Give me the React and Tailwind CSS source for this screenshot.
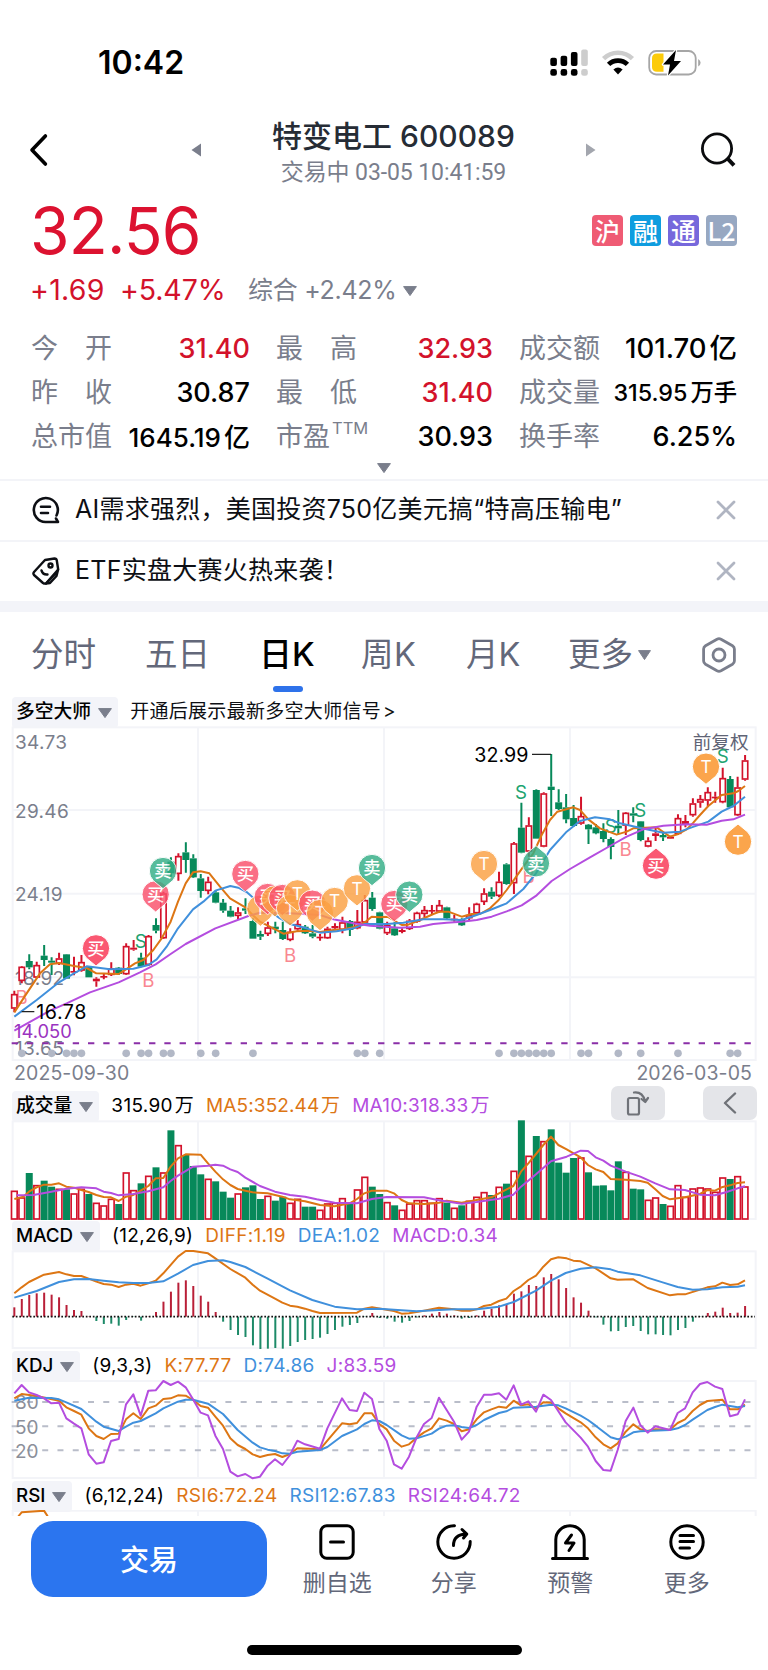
import React from "react";

// ===== Colors =====
const RED = "#d3122b";
const GREEN = "#07895a";
const ORANGE = "#dd7614";
const BLUE = "#4090dc";
const PURPLE = "#b44ddf";
const LINE = "#f3f4f8";
const GRAY = "#7a7e8c";

// ===== Chart units: 3 units = 1px, one candle every 22.37 units =====
const STEP = 22.37;
const cx = (i) => 43 + i * STEP;

// [direction, high, body top, body bottom, low, volume top, macd end]
const CANDLES = [
  ["u", 812, 822, 866, 877, 332, 682], ["u", 738, 740, 783, 790, 352, 657],
  ["d", 703, 723, 742, 748, 279, 645], ["u", 725, 735, 773, 775, 315, 640],
  ["d", 675, 707, 720, 738, 302, 638], ["d", 712, 722, 728, 765, 320, 644],
  ["u", 698, 715, 732, 735, 326, 652], ["d", 702, 703, 776, 776, 328, 675],
  ["u", 710, 753, 758, 766, 340, 690], ["u", 705, 726, 752, 755, 326, 693],
  ["d", 738, 740, 772, 772, 342, 709], ["u", 772, 776, 784, 800, 368, 723],
  ["u", 762, 768, 771, 778, 376, 732], ["u", 727, 745, 765, 768, 356, 731],
  ["d", 741, 743, 762, 765, 372, 737], ["u", 670, 678, 763, 765, 277, 720],
  ["u", 660, 683, 689, 692, 330, 711], ["d", 698, 713, 740, 742, 310, 722],
  ["u", 645, 648, 735, 738, 287, 709], ["d", 595, 615, 632, 640, 262, 696],
  ["u", 515, 520, 655, 657, 277, 665], ["d", 412, 425, 460, 470, 151, 635],
  ["u", 400, 408, 462, 482, 195, 608], ["d", 367, 397, 420, 458, 225, 601],
  ["d", 403, 415, 472, 474, 258, 618], ["d", 462, 475, 513, 533, 283, 647],
  ["u", 470, 485, 513, 523, 296, 665], ["d", 512, 517, 548, 550, 304, 696],
  ["d", 537, 548, 572, 578, 335, 725], ["d", 558, 572, 590, 592, 353, 750],
  ["u", 562, 577, 588, 598, 340, 765], ["d", 535, 565, 572, 582, 322, 771],
  ["d", 595, 603, 656, 656, 316, 796], ["d", 632, 642, 650, 660, 357, 807],
  ["u", 605, 622, 642, 648, 347, 806], ["d", 605, 620, 628, 640, 362, 804],
  ["d", 605, 630, 657, 660, 350, 806], ["u", 625, 635, 660, 664, 368, 798],
  ["u", 600, 612, 628, 632, 356, 786], ["d", 615, 620, 640, 642, 380, 780],
  ["d", 615, 640, 650, 655, 380, 777], ["u", 642, 650, 654, 662, 389, 773],
  ["u", 620, 626, 655, 657, 370, 762], ["u", 610, 618, 625, 630, 368, 750],
  ["u", 590, 607, 630, 640, 354, 740], ["d", 600, 603, 630, 648, 370, 735],
  ["u", 570, 605, 625, 628, 328, 729], ["u", 525, 540, 608, 612, 290, 711],
  ["d", 516, 533, 567, 572, 320, 699], ["d", 575, 577, 626, 628, 342, 714],
  ["u", 605, 615, 640, 645, 366, 716], ["d", 605, 625, 646, 648, 376, 725],
  ["u", 625, 630, 636, 640, 389, 728], ["u", 597, 602, 627, 630, 370, 723],
  ["u", 575, 578, 605, 608, 360, 712], ["u", 558, 570, 582, 592, 360, 706],
  ["u", 555, 570, 574, 583, 368, 701], ["u", 540, 555, 575, 578, 354, 696],
  ["d", 560, 562, 595, 597, 368, 701], ["u", 585, 596, 599, 605, 383, 706],
  ["d", 595, 600, 616, 618, 376, 716], ["u", 562, 585, 595, 600, 362, 714],
  ["u", 548, 551, 580, 583, 350, 706], ["u", 505, 520, 546, 555, 336, 692],
  ["d", 502, 515, 530, 537, 345, 686], ["u", 455, 485, 528, 532, 320, 676],
  ["d", 430, 433, 492, 494, 311, 672], ["u", 366, 370, 490, 522, 272, 641],
  ["d", 248, 323, 398, 400, 121, 634], ["u", 292, 316, 395, 410, 227, 615],
  ["d", 208, 210, 356, 356, 168, 618], ["u", 217, 220, 380, 382, 183, 592],
  ["d", 102, 200, 210, 288, 148, 582], ["d", 208, 247, 267, 270, 248, 598],
  ["d", 222, 262, 298, 310, 278, 624], ["d", 255, 294, 318, 320, 234, 652],
  ["u", 230, 288, 311, 314, 232, 668], ["d", 312, 314, 328, 372, 277, 692],
  ["d", 312, 322, 340, 343, 317, 712], ["d", 310, 333, 357, 367, 316, 734],
  ["d", 352, 357, 381, 418, 331, 754], ["d", 270, 317, 325, 342, 244, 753],
  ["u", 276, 278, 317, 345, 275, 741], ["d", 262, 280, 287, 307, 326, 738],
  ["d", 303, 304, 360, 364, 328, 753], ["u", 352, 362, 380, 382, 359, 763],
  ["u", 322, 340, 348, 363, 352, 763], ["d", 338, 345, 352, 363, 372, 765],
  ["u", 347, 350, 356, 357, 377, 766], ["u", 283, 294, 342, 345, 315, 750],
  ["u", 285, 303, 312, 322, 350, 744], ["u", 235, 250, 286, 290, 325, 725],
  ["u", 225, 237, 248, 263, 322, 711], ["u", 202, 216, 242, 258, 325, 699],
  ["u", 215, 230, 234, 248, 335, 695], ["u", 143, 174, 247, 250, 292, 683],
  ["d", 168, 177, 262, 264, 297, 699], ["u", 170, 202, 286, 288, 288, 698],
  ["u", 105, 121, 179, 182, 319, 678],
];

const DOTS = [1, 5, 7, 8, 9, 15, 17, 18, 20, 21, 25, 27, 32, 46, 47, 49, 65, 67, 68, 69, 70, 71, 72, 76, 77, 81, 84, 89, 96, 97];

// ===== Main chart lines =====
const MA_SHORT =
  "43,877 80,820 120,760 150,733 177,729 222,738 260,744 289,760 356,762 378,748 405,730 430,720 460,690 485,655 512,605 534,545 557,490 579,457 602,454 628,460 660,500 690,535 736,562 758,585 780,605 820,625 850,641 890,634 930,632 960,636 1000,630 1030,628 1060,622 1095,607 1115,590 1140,592 1162,590 1180,600 1205,615 1225,614 1260,600 1300,582 1320,575 1345,575 1385,590 1415,582 1440,582 1470,565 1496,540 1520,510 1545,475 1570,440 1600,400 1625,345 1650,300 1672,275 1720,262 1740,270 1765,298 1800,325 1850,344 1880,335 1900,325 1970,322 1990,336 2010,350 2035,342 2060,328 2080,308 2100,285 2125,258 2165,225 2200,220 2215,213 2235,198";
const MA_MID =
  "43,890 110,840 177,787 222,760 260,739 330,748 400,746 445,735 470,718 500,680 534,625 579,568 610,545 646,512 691,498 715,503 740,516 790,560 840,595 870,612 920,625 960,638 1010,634 1060,625 1095,612 1160,612 1210,608 1270,598 1330,598 1385,600 1430,585 1470,570 1500,558 1520,550 1570,507 1608,460 1650,390 1700,335 1740,303 1785,292 1830,298 1860,310 1925,325 1990,338 2040,335 2075,322 2125,305 2165,275 2200,258 2235,230";
const MA_LONG =
  "43,932 150,872 200,850 270,817 356,787 420,757 467,733 512,702 557,672 646,625 745,588 780,578 870,580 960,585 1000,598 1060,610 1110,617 1200,623 1260,620 1300,612 1340,608 1385,605 1430,600 1475,590 1520,574 1565,556 1610,526 1655,483 1710,447 1770,412 1830,378 1880,350 1930,328 1990,317 2060,313 2120,314 2165,302 2200,298 2235,284";

// ===== Volume lines =====
const VOL_MA5 =
  "43,357 70,350 87,335 110,322 132,314 154,314 177,310 199,320 222,323 244,330 266,336 289,345 311,351 333,352 356,363 378,350 400,345 422,332 445,318 467,295 490,294 512,260 534,235 557,223 602,224 624,250 646,275 669,298 691,315 713,327 736,332 758,337 803,340 825,345 847,350 870,358 915,364 960,375 1004,379 1049,370 1071,357 1093,340 1116,332 1160,332 1182,340 1205,360 1227,370 1272,372 1317,368 1340,362 1385,368 1430,360 1474,352 1497,340 1540,318 1563,275 1585,250 1608,222 1630,195 1653,170 1675,195 1700,208 1742,232 1764,255 1787,268 1810,276 1832,297 1877,299 1921,303 1943,308 1966,328 1988,348 2010,358 2055,352 2100,342 2122,330 2145,332 2165,322 2190,316 2213,309 2235,307";
const VOL_MA10 =
  "50,346 100,345 154,335 199,326 244,322 289,325 311,335 333,339 356,346 400,342 445,334 490,322 512,303 534,287 579,260 624,257 646,254 669,257 691,268 713,276 736,293 780,318 825,335 870,345 915,350 950,358 1004,368 1071,370 1116,357 1160,351 1272,352 1317,361 1385,371 1430,366 1497,356 1540,344 1563,320 1608,283 1653,244 1700,230 1742,212 1764,213 1787,232 1810,242 1832,257 1877,275 1921,290 1966,310 2010,328 2055,330 2100,344 2145,346 2180,336 2213,325 2235,319";

// ===== MACD lines =====
const DIFF =
  "43,640 65,622 87,606 132,584 177,576 199,583 222,588 244,588 266,596 289,605 311,612 333,614 356,621 378,614 400,611 422,617 445,610 467,602 490,580 534,530 557,513 580,513 624,520 646,535 691,567 736,593 758,614 780,632 825,656 847,668 870,677 892,680 915,686 937,693 960,699 1071,698 1093,686 1116,682 1160,689 1182,693 1205,701 1227,700 1272,692 1317,683 1362,688 1385,692 1410,692 1430,688 1452,678 1474,674 1497,663 1519,656 1541,633 1563,619 1585,600 1608,587 1630,560 1653,538 1675,532 1700,535 1720,542 1742,544 1787,565 1832,595 1853,599 1900,598 1943,624 2010,646 2033,643 2055,643 2122,622 2145,619 2167,608 2190,615 2213,613 2235,601";
const DEA =
  "43,653 110,633 177,606 222,598 266,597 311,602 356,607 400,609 445,609 490,604 534,581 579,555 624,543 669,541 691,546 736,561 803,596 870,631 937,660 1004,680 1071,688 1138,686 1182,689 1250,694 1317,690 1362,688 1430,688 1497,680 1541,666 1608,632 1653,602 1697,579 1742,566 1787,562 1832,568 1853,575 1921,586 1988,607 2033,621 2078,629 2122,628 2167,622 2213,620 2235,616";

// ===== KDJ lines =====
const K_LINE =
  "43,145 65,132 110,138 177,152 199,172 222,183 244,194 266,235 289,258 311,267 333,252 356,251 378,208 400,190 422,207 445,175 467,167 490,147 512,145 534,136 557,137 579,150 602,168 624,173 646,200 669,227 691,265 713,285 736,297 758,313 780,321 803,315 825,312 847,321 870,312 892,295 960,298 982,272 1026,220 1049,223 1071,219 1093,190 1116,190 1138,222 1160,238 1182,272 1205,290 1227,283 1250,263 1272,247 1295,235 1317,205 1340,212 1362,222 1385,244 1407,238 1430,208 1452,187 1474,178 1497,170 1519,173 1541,152 1563,166 1585,163 1608,175 1630,157 1653,158 1675,175 1697,190 1742,217 1764,235 1787,262 1810,283 1832,295 1853,280 1877,245 1900,223 1921,238 1943,243 1966,238 2010,239 2033,219 2055,208 2078,183 2100,165 2122,153 2167,149 2190,178 2213,178 2235,164";
const D_LINE =
  "43,152 87,143 154,144 177,148 199,157 244,177 289,215 311,230 356,243 378,230 400,218 422,213 467,190 490,175 534,155 557,149 579,149 624,161 669,192 713,240 758,278 780,292 803,299 825,303 847,310 870,311 892,305 960,300 982,291 1026,258 1071,238 1093,222 1116,211 1138,213 1160,225 1205,256 1227,266 1250,265 1295,251 1317,236 1340,227 1362,226 1385,231 1407,234 1430,225 1452,210 1497,189 1519,184 1541,173 1608,170 1653,164 1675,166 1697,175 1742,197 1764,210 1787,227 1832,262 1853,268 1877,260 1900,247 1921,244 2010,240 2033,235 2055,225 2078,209 2122,180 2145,171 2167,164 2213,172 2235,168";
const J_LINE =
  "43,130 65,105 87,127 110,135 132,145 154,160 177,158 199,205 222,221 244,235 266,313 289,341 311,337 333,273 356,267 378,163 400,133 422,197 445,122 467,121 490,93 512,105 534,95 557,112 579,148 602,188 624,196 646,257 669,297 691,365 713,379 736,372 758,385 780,380 803,347 825,328 847,345 870,315 892,272 915,283 960,296 982,235 1026,145 1049,180 1071,183 1093,128 1116,147 1138,237 1160,272 1182,343 1205,356 1227,320 1250,262 1272,222 1295,204 1317,143 1340,180 1362,215 1385,269 1407,245 1430,170 1452,134 1474,134 1497,130 1519,149 1541,106 1563,164 1585,154 1608,185 1630,134 1653,150 1697,217 1742,263 1764,290 1787,333 1810,360 1832,362 1853,300 1877,213 1900,173 1921,225 1943,248 1966,229 2010,240 2033,189 2055,175 2078,127 2100,102 2122,96 2145,110 2167,117 2190,199 2213,193 2235,148";

// ===== Signals =====
const PINS = [
  { t: "买", x: 288, y: 685, o: 0.95 },
  { t: "买", x: 467, y: 523 },
  { t: "卖", x: 489, y: 453 },
  { t: "买", x: 736, y: 462 },
  { t: "T", x: 781, y: 566 },
  { t: "买", x: 803, y: 531 },
  { t: "T", x: 825, y: 538 },
  { t: "买", x: 847, y: 534 },
  { t: "T", x: 870, y: 565 },
  { t: "T", x: 892, y: 520 },
  { t: "买", x: 937, y: 551 },
  { t: "T", x: 960, y: 579 },
  { t: "T", x: 1004, y: 543 },
  { t: "T", x: 1071, y: 505 },
  { t: "卖", x: 1116, y: 444 },
  { t: "买", x: 1183, y: 552 },
  { t: "卖", x: 1228, y: 524 },
  { t: "T", x: 1452, y: 432 },
  { t: "T", x: 2118, y: 140, o: 0.95 },
  { t: "卖", x: 1608, y: 430, up: true },
  { t: "买", x: 1968, y: 437, up: true, o: 0.95 },
  { t: "T", x: 2214, y: 365, up: true, o: 0.95 },
];
const PIN_COLORS = { 买: "#fa506b", 卖: "#33ae86", T: "#fba143" };

const LETTERS = [
  ["S", 422, 662], ["S", 1563, 215], ["S", 1832, 318], ["S", 1921, 270], ["S", 2168, 108],
  ["B", 65, 832], ["B", 445, 780], ["B", 870, 705], ["B", 1586, 468], ["B", 1877, 387],
];

const Triangle = ({ w = 14, h = 10 }) => (
  <svg width={w} height={h} viewBox="0 0 14 10" preserveAspectRatio="none" className="shrink-0">
    <path d="M0.6 0.6H13.4L7 9.6Z" fill={GRAY} stroke={GRAY} strokeLinejoin="round" />
  </svg>
);

const Poly = ({ points, color }) => (
  <polyline points={points} fill="none" stroke={color} strokeWidth="6" strokeLinejoin="round" />
);

// Frame and the three vertical grid lines shared by all panels
const Frame = ({ top, bottom }) => (
  <g stroke={LINE} strokeWidth="6" fill="none">
    <rect x="38" y={top} width="2229" height={bottom - top} />
    {[594, 1152, 1710].map((x) => (
      <path key={x} d={`M${x} ${top}V${bottom}`} />
    ))}
  </g>
);

function StatusBar() {
  return (
    <div className="h-[116px] pt-[9px] pl-[98px] pr-[66px] flex items-center justify-between">
      <div className="text-[32px] font-semibold text-black leading-none">10:42</div>
      <div className="flex items-center gap-[13px]">
        <svg width="38" height="28" viewBox="0 0 38 28">
          <g fill="#000">
            <rect x="0.3" y="8.8" width="6.6" height="8.2" rx="2" />
            <rect x="10.6" y="6.8" width="6.6" height="10.2" rx="2" />
            <rect x="20.9" y="3" width="6.6" height="14" rx="2" />
            <rect x="0.3" y="20" width="6.6" height="6.8" rx="2.4" />
            <rect x="10.6" y="20" width="6.6" height="6.8" rx="2.4" />
            <rect x="20.9" y="20" width="6.6" height="6.8" rx="2.4" />
          </g>
          <g fill="#cdcdcd">
            <rect x="31.2" y="0.5" width="6.6" height="16.5" rx="2" />
            <rect x="31.2" y="20" width="6.6" height="6.8" rx="2.4" />
          </g>
        </svg>
        <svg width="34" height="28" viewBox="0 0 34 28" fill="none">
          <path d="M2.6 9.6A20.5 20.5 0 0 1 31.4 9.6" stroke="#cdcdcd" strokeWidth="4.6" />
          <path d="M7.6 15.4A13.5 13.5 0 0 1 26.4 15.4" stroke="#000" strokeWidth="4.8" />
          <path d="M12.4 20.6Q17 16.6 21.6 20.6L17 25.6Z" fill="#000" />
        </svg>
        <svg width="54" height="28" viewBox="0 0 54 28" fill="none">
          <rect x="1.2" y="2" width="46.5" height="23.5" rx="7" stroke="#a6a6a6" strokeWidth="1.8" />
          <path d="M50.2 10Q52.6 11.5 52.6 13.7Q52.6 16 50.2 17.5Z" fill="#a6a6a6" />
          <path d="M9 4.6H15.5V22.8H9Q4 22.8 4 18V9.4Q4 4.6 9 4.6Z" fill="#fccb0a" />
          <path d="M28 1L15 15.5H22L20 26.5L33 12H26Z" fill="#000" stroke="#fff" strokeWidth="2.4" strokeLinejoin="round" paintOrder="stroke" />
        </svg>
      </div>
    </div>
  );
}

function Header() {
  return (
    <div className="h-[68px] pl-[29px] pr-[31px] flex items-center">
      <svg width="20" height="34" viewBox="0 0 20 34" fill="none">
        <path d="M16.4 3L3 17L16.4 31" stroke="#000" strokeWidth="3.6" strokeLinecap="round" strokeLinejoin="round" />
      </svg>
      <div className="w-[405px] flex items-center justify-between ml-[142px] mr-auto">
        <svg width="11" height="14" viewBox="0 0 11 14">
          <path d="M10 0.5V13.5L0.5 7Z" fill={GRAY} />
        </svg>
        <div className="mt-[10px] flex flex-col items-center whitespace-nowrap">
          <div className="text-[30px] leading-[36px] text-[#262c35] font-medium">特变电工 600089</div>
          <div className="text-[23px] leading-[38px] tracking-[-0.1px] text-[#7a7e8c] font-[Roboto,'Noto_Sans_CJK_SC',sans-serif]">
            交易中 03-05 10:41:59
          </div>
        </div>
        <svg width="11" height="14" viewBox="0 0 11 14">
          <path d="M1 0.5V13.5L10.5 7Z" fill="#a3a6ae" />
        </svg>
      </div>
      <svg width="36" height="36" viewBox="0 0 36 36" fill="none" stroke="#0b0c0e" strokeWidth="2.8">
        <circle cx="16" cy="16.5" r="14.6" />
        <path d="M26.5 26.5L33 33.4" strokeWidth="4" />
      </svg>
    </div>
  );
}

const TAGS = [
  ["沪", "bg-[#ef5b74]"],
  ["融", "bg-[#0f9ddf]"],
  ["通", "bg-[#7668dc]"],
  ["L2", "bg-[#97a8c2]"],
];

function Price() {
  return (
    <>
      <div className="h-[86px] pl-[30px] pr-[31px] flex items-center justify-between">
        <div className="text-[64px] leading-none text-[#dc1230] tracking-[-0.8px] pt-[8px]">32.56</div>
        <div className="flex gap-[7px] pt-[6px]">
          {TAGS.map(([t, bg]) => (
            <div
              key={t}
              className={`w-[31px] h-[31px] rounded-[4px] flex items-center justify-center text-white text-[25px] leading-[31px] font-medium font-['Noto_Sans_CJK_SC',sans-serif] ${bg}`}
            >
              {t}
            </div>
          ))}
        </div>
      </div>
      <div className="h-[40px] pt-px pl-[30px] flex items-center whitespace-nowrap text-[28.5px] text-[#d3122b]">
        <span className="w-[90px] tracking-[0.3px]">+1.69</span>
        <span className="w-[128px] tracking-[-0.1px]">+5.47%</span>
        <span className="text-[25px] text-[#7a7e8c] mr-[7px] tracking-[-0.3px]">综合 +2.42%</span>
        <Triangle w={14} h={10} />
      </div>
    </>
  );
}

const STATS = [
  ["今　开", "31.40", true], ["最　高", "32.93", true], ["成交额", "101.70", false, "亿"],
  ["昨　收", "30.87", false], ["最　低", "31.40", true], ["成交量", "315.95", false, "万手"],
  ["总市值", "1645.19", false, "亿"], ["市盈", "30.93", false], ["换手率", "6.25%", false],
];

// long values are set smaller so that they stay on one line
const VALUE_SIZE = { "101.70": "text-[27.5px]", "1645.19": "text-[26px]", "315.95": "text-[23.3px]" };

function Stats() {
  return (
    <div className="mt-[17px] pl-[31px] grid grid-cols-[219px_217px_218px] gap-x-[26px] whitespace-nowrap">
      {STATS.map(([label, value, up, unit]) => (
        <div key={label} className="h-[44px] flex items-center justify-between">
          <div className="text-[27px] text-[#7a7e8c] flex">
            {label}
            {label === "市盈" && <span className="text-[16.5px] leading-none ml-[2px] mt-[3px]">TTM</span>}
          </div>
          <div className={`font-medium flex items-center gap-[3px] ${up ? "text-[#d3122b]" : "text-black"} ${VALUE_SIZE[value] || "text-[27px]"}`}>
            <span>{value}</span>
            {unit && <span>{unit}</span>}
          </div>
        </div>
      ))}
    </div>
  );
}

const CloseIcon = () => (
  <svg width="20" height="20" viewBox="0 0 20 20" stroke="#b0b5c2" strokeWidth="2.8" strokeLinecap="round">
    <path d="M2 2L18 18M18 2L2 18" />
  </svg>
);

function News() {
  return (
    <div className="text-[25px] tracking-[0.25px] text-[#0d0f14] whitespace-nowrap">
      <div className="h-[61px] border-t-2 border-[#f3f4f8] pl-[32px] pr-[32px] pb-[2px] flex items-center">
        <svg width="28" height="28" viewBox="0 0 28 28" fill="none" stroke="#0d0f14" strokeWidth="2.6" strokeLinecap="round" strokeLinejoin="round">
          <path d="M24.5 19.5A12 12 0 1 0 13.5 26H26L24 22.5" />
          <path d="M9 10.8H18M9 17H16" />
        </svg>
        <span className="ml-[15px] flex-1">AI需求强烈，美国投资750亿美元搞“特高压输电”</span>
        <CloseIcon />
      </div>
      <div className="h-[61px] border-t-2 border-[#f3f4f8] pl-[32px] pr-[32px] pb-[2px] flex items-center">
        <svg width="28" height="28" viewBox="0 0 28 28" fill="none" stroke="#0d0f14" strokeWidth="2.4" strokeLinecap="round" strokeLinejoin="round">
          <path d="M13 3L22.5 1.5Q24.5 1.5 24.8 3.5L26.2 12.5L14 26.5Q12.5 27 11 26L2 18Q0.8 16.5 2 15Z" />
          <path d="M26 13L24.5 19L18 26L14 26.5L23 17" />
          <circle cx="18.5" cy="8.5" r="2" />
          <path d="M9.5 13.5Q11 18 15.5 17.5" />
        </svg>
        <span className="ml-[15px] flex-1">ETF实盘大赛火热来袭！</span>
        <CloseIcon />
      </div>
      <div className="h-[11px] bg-[#f3f4f9]" />
    </div>
  );
}

function Tabs() {
  return (
    <div className="h-[84px] pt-[2px] pl-[31px] pr-[32px] flex items-center text-[32.5px] text-[#63687a] whitespace-nowrap">
      <span className="w-[114px]">分时</span>
      <span className="w-[114px]">五日</span>
      <span className="w-[102px] text-black font-medium text-[33px]">
        <span className="relative">
          日K
          <i className="absolute left-1/2 -ml-[14px] bottom-[-18px] w-[30px] h-[6px] rounded-[3px] bg-[#2e72ea]" />
        </span>
      </span>
      <span className="w-[105px] tracking-[0.4px]">周K</span>
      <span className="w-[102px]">月K</span>
      <span className="flex items-center gap-[5px] mr-auto">
        更多
        <Triangle w={13} h={10} />
      </span>
      <svg width="34" height="36" viewBox="0 0 34 36" fill="none" stroke="#7a7e8c" strokeWidth="2.8" strokeLinejoin="round">
        <path d="M15 2.2Q17 1.2 19 2.2L30.5 8.8Q32.4 10 32.4 12V24Q32.4 26 30.5 27.2L19 33.8Q17 34.8 15 33.8L3.5 27.2Q1.6 26 1.6 24V12Q1.6 10 3.5 8.8Z" />
        <circle cx="17" cy="18" r="6" />
      </svg>
    </div>
  );
}

const Chip = ({ children }) => (
  <div className="h-[31px] bg-[#f3f4f9] rounded-[4px] pl-[4px] pr-[6px] flex items-center gap-[7px] text-black font-medium text-[18.8px] tracking-[0px]">
    {children}
    <Triangle w={14} h={10} />
  </div>
);

// Header line of one indicator: chip and its values
function PanelHead({ name, items, children }) {
  return (
    <div className="h-[30px] pt-[3px] pl-[12px] pr-[11px] flex items-center gap-[12px] text-[19px] tracking-[0.3px] whitespace-nowrap">
      <Chip>{name}</Chip>
      {items.map(([text, color]) => (
        <span key={text} className={color}>{text}</span>
      ))}
      {children}
    </div>
  );
}

const Pin = ({ t, x, y, up, o = 0.82 }) => (
  <g transform={`translate(${x} ${y})`} opacity={o}>
    <path
      d="M0 53L-29 29A41 41 0 1 1 29 29Z"
      transform={up ? "rotate(180)" : undefined}
      fill={PIN_COLORS[t]}
      stroke="#fff"
      strokeWidth="3"
      strokeLinejoin="round"
    />
    <text x="0" y="19" textAnchor="middle" fontSize="52" fontWeight={t === "T" ? "400" : "500"} fill="#fff">
      {t}
    </text>
  </g>
);

function MainChart() {
  return (
    <svg width="768" height="336" viewBox="0 18 2304 1008" className="block">
      <Frame top={22} bottom={1020} />
      {[270, 521, 772].map((y) => (
        <path key={y} d={`M38 ${y}H2267`} stroke={LINE} strokeWidth="6" />
      ))}
      <g fontSize="57" fill={GRAY} letterSpacing="1">
        <text x="45" y="88">34.73</text>
        <text x="45" y="293">29.46</text>
        <text x="45" y="544">24.19</text>
        <text x="45" y="794">18.92</text>
        <text x="45" y="1006">13.65</text>
      </g>
      <text x="2078" y="88" fontSize="56" fill="#5f6475">前复权</text>
      {DOTS.map((i) => (
        <circle key={i} cx={cx(i)} cy="1000" r="11.5" fill="#b2b8c6" />
      ))}
      <path d="M35 970H2260" stroke="#8a2fa8" strokeWidth="6" strokeDasharray="19 26.8" />
      <g fontSize="56">
        {LETTERS.map(([t, x, y]) => (
          <text key={t + x} x={x} y={y + 21} textAnchor="middle" fill={t === "S" ? "#20a36f" : "#f98791"}>
            {t}
          </text>
        ))}
      </g>
      {CANDLES.map(([dir, high, top, bottom, low], i) => {
        const x = cx(i);
        const up = dir === "u";
        const c = up ? RED : GREEN;
        const hollow = up && bottom - top > 9;
        return (
          <g key={i} stroke={c} strokeWidth="6">
            <path d={`M${x} ${high}V${top}M${x} ${bottom}V${low}`} />
            {hollow ? (
              <rect x={x - 8} y={top + 2} width="16" height={bottom - top - 4} fill="#fff" strokeWidth="5" />
            ) : (
              <rect x={x - 10.5} y={top} width="21" height={Math.max(bottom - top, 5)} fill={c} stroke="none" />
            )}
          </g>
        );
      })}
      <Poly points={MA_SHORT} color={ORANGE} />
      <Poly points={MA_MID} color={BLUE} />
      <Poly points={MA_LONG} color={PURPLE} />
      <path d="M65 875H103M1596 103H1653" stroke="#222" strokeWidth="4" />
      <g fontSize="59" fill="#000">
        <text x="109" y="896" letterSpacing="1.6">16.78</text>
        <text x="1585" y="125" textAnchor="end">32.99</text>
      </g>
      <text x="42" y="953" fontSize="55" fill="#9a33c0">14.050</text>
      {PINS.map((p) => (
        <Pin key={p.x} {...p} />
      ))}
    </svg>
  );
}

function VolumeChart() {
  return (
    <svg width="768" height="100" viewBox="0 120 2304 300" className="block">
      <Frame top={124} bottom={417} />
      {CANDLES.map(([dir, , , , , vol], i) =>
        dir === "u" ? (
          <rect key={i} x={cx(i) - 8.5} y={vol + 2} width="17" height={415 - vol} fill="#fff" stroke={RED} strokeWidth="5" />
        ) : (
          <rect key={i} x={cx(i) - 10.5} y={vol} width="21" height={420 - vol} fill={GREEN} />
        )
      )}
      <Poly points={VOL_MA5} color={ORANGE} />
      <Poly points={VOL_MA10} color={PURPLE} />
    </svg>
  );
}

function MacdChart() {
  return (
    <svg width="768" height="100" viewBox="0 510 2304 300" className="block">
      <Frame top={514} bottom={804} />
      {CANDLES.map((c, i) => (
        <path key={i} d={`M${cx(i)} 710V${c[6]}`} stroke={c[6] < 710 ? "#b91f38" : "#1d8a68"} strokeWidth="6" />
      ))}
      <path d="M37 710H2265" stroke="#111" strokeWidth="5" strokeDasharray="5 5.5" />
      <Poly points={DIFF} color={ORANGE} />
      <Poly points={DEA} color={BLUE} />
    </svg>
  );
}

function KdjChart() {
  return (
    <svg width="768" height="100" viewBox="0 90 2304 300" className="block">
      <Frame top={93} bottom={384} />
      {[[80, 156], [50, 229], [20, 301]].map(([v, y]) => (
        <g key={v}>
          <path d={`M35 ${y}H2262`} stroke="#b9bdc9" strokeWidth="6" strokeDasharray="18 27.8" />
          <text x="45" y={y + 22} fontSize="57" fill="#8b8f9a">{v}</text>
        </g>
      ))}
      <Poly points={K_LINE} color={ORANGE} />
      <Poly points={D_LINE} color={BLUE} />
      <Poly points={J_LINE} color={PURPLE} />
    </svg>
  );
}

function RsiChart() {
  return (
    <svg width="768" height="6" viewBox="0 480 2304 18" className="block">
      <Frame top={482} bottom={700} />
      <Poly points="55,499 65,487 132,482 143,499" color={ORANGE} />
    </svg>
  );
}

const ACTIONS = [
  {
    label: "删自选",
    icon: (
      <>
        <rect x="1.8" y="1.8" width="32.4" height="32.4" rx="6" />
        <path d="M11.5 18H24.5" />
      </>
    ),
  },
  {
    label: "分享",
    icon: (
      <>
        <path d="M18.5 1.8A16.2 16.2 0 1 0 34.2 17.5" />
        <path d="M17.5 21.5Q17.5 10.5 30.5 10M26 5.5L30.8 10L27.5 14" />
      </>
    ),
  },
  {
    label: "预警",
    icon: (
      <>
        <path d="M3.8 34V15.5A14.2 13.7 0 0 1 32.2 15.5V34M0.5 34.4H35.5" />
        <path d="M19.5 11L13.5 19H22L17 26.5" />
      </>
    ),
  },
  {
    label: "更多",
    icon: (
      <>
        <circle cx="18" cy="18" r="16.2" />
        <path d="M11 11.5H24.5M11 17.5H24.5M11 24H20.5" />
      </>
    ),
  },
];

function BottomBar() {
  return (
    <div className="pt-[5px] h-[154px] flex flex-col items-center">
      <div className="w-full pl-[31px] pr-[23px] flex">
        <button className="w-[236px] h-[76px] pt-[3px] rounded-[22px] bg-[#2b75ef] text-white text-[29px] font-medium mr-[12px]">交易</button>
        {ACTIONS.map((a) => (
          <div key={a.label} className="flex-1 pt-[3px] flex flex-col items-center">
            <svg width="36" height="36" viewBox="0 0 36 36" fill="none" stroke="#000" strokeWidth="3" strokeLinecap="round" strokeLinejoin="round" className="overflow-visible">
              {a.icon}
            </svg>
            <span className="mt-[7px] text-[23px] leading-[32px] text-[#63687a]">{a.label}</span>
          </div>
        ))}
      </div>
      <div className="mt-[46px] w-[275px] h-[10px] rounded-full bg-black" />
    </div>
  );
}

export default function App() {
  return (
    <div className="w-[768px] h-[1670px] overflow-hidden bg-white font-[Inter,'Noto_Sans_CJK_SC',sans-serif]">
      <StatusBar />
      <Header />
      <Price />
      <Stats />
      <div className="h-[20px] pb-[3px] flex items-center justify-center">
        <Triangle w={14} h={10} />
      </div>
      <News />
      <Tabs />

      {/* ===== K-line ===== */}
      <PanelHead name="多空大师" items={[["开通后展示最新多空大师信号\u200A>", "text-[#0d0f14]"]]} />
      <MainChart />
      <div className="h-[28px] pl-[14px] pr-[16px] flex justify-between text-[19.5px] leading-[22px] tracking-[0.1px] text-[#7a7e8c]">
        <span>2025-09-30</span>
        <span>2026-03-05</span>
      </div>

      {/* ===== Indicators ===== */}
      <PanelHead
        name="成交量"
        items={[
          ["315.90\u200A万", "text-black"],
          ["MA5:352.44\u200A万", "text-[#dd7614] tracking-[0.1px]"],
          ["MA10:318.33\u200A万", "text-[#b44ddf] tracking-[0.2px]"],
        ]}
      >
        <div className="ml-auto -mt-[8px] flex gap-[38px]">
          <div className="w-[54px] h-[34px] rounded-[7px] bg-[#e4e5e9] flex items-center justify-center">
            <svg width="24" height="26" viewBox="0 0 24 26" fill="none" stroke="#6f7278" strokeWidth="2.2" strokeLinejoin="round" strokeLinecap="round">
              <rect x="2" y="8" width="11" height="16.5" rx="1.8" />
              <path d="M8 2.5Q16.5 1.5 19 11M15.5 9L19.2 12L22 8" />
            </svg>
          </div>
          <div className="w-[54px] h-[34px] rounded-[7px] bg-[#e4e5e9] flex items-center justify-center">
            <svg width="14" height="22" viewBox="0 0 14 22" fill="none" stroke="#6f7278" strokeWidth="2.4" strokeLinecap="round" strokeLinejoin="round">
              <path d="M12 1.5L2 11L12 20.5" />
            </svg>
          </div>
        </div>
      </PanelHead>
      <VolumeChart />
      <PanelHead
        name="MACD"
        items={[["(12,26,9)", "text-black"], ["DIFF:1.19", "text-[#dd7614]"], ["DEA:1.02", "text-[#4090dc]"], ["MACD:0.34", "text-[#b44ddf]"]]}
      />
      <MacdChart />
      <PanelHead
        name="KDJ"
        items={[["(9,3,3)", "text-black"], ["K:77.77", "text-[#dd7614]"], ["D:74.86", "text-[#4090dc]"], ["J:83.59", "text-[#b44ddf]"]]}
      />
      <KdjChart />
      <PanelHead
        name="RSI"
        items={[["(6,12,24)", "text-black"], ["RSI6:72.24", "text-[#dd7614]"], ["RSI12:67.83", "text-[#4090dc]"], ["RSI24:64.72", "text-[#b44ddf]"]]}
      />
      <RsiChart />
      <BottomBar />
    </div>
  );
}
